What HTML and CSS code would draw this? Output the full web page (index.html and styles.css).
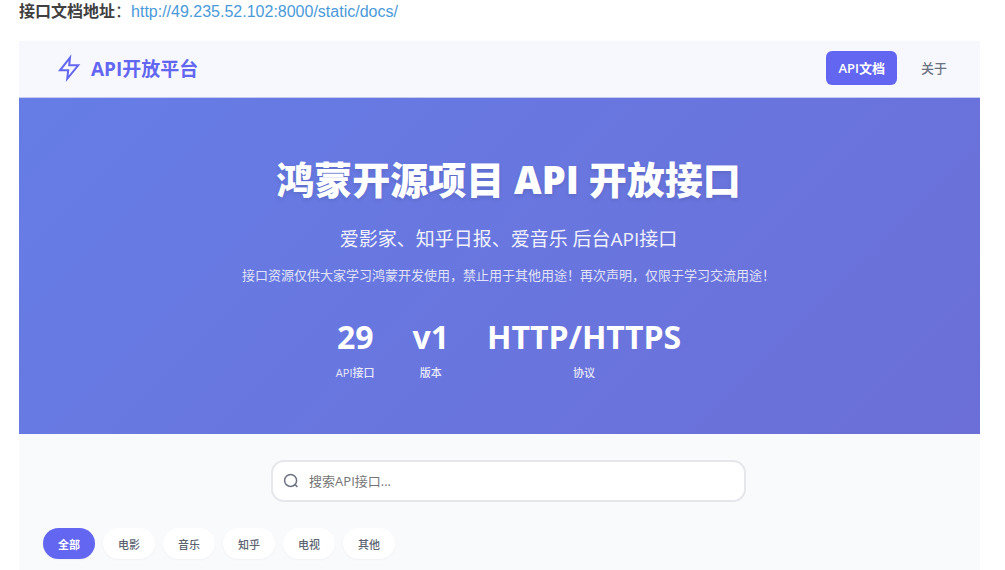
FILE: index.html
```
<!DOCTYPE html>
<html lang="zh-CN">
<head>
  <meta charset="UTF-8" />
  <meta name="viewport" content="width=device-width, initial-scale=1.0"/>
  <title>API开放平台</title>
  <link rel="stylesheet" href="styles.css">
</head>
<body>

  <p class="doc-link"><strong>接口文档地址</strong>：<a href="http://49.235.52.102:8000/static/docs/">http://49.235.52.102:8000/static/docs/</a></p>

  <div class="platform">
    <!-- Header -->
    <header class="navbar">
      <div class="brand">
        <svg class="brand-icon" viewBox="0 0 24 28" fill="none" stroke="currentColor" stroke-width="2" stroke-linejoin="miter">
          <path d="M13 3.6 L3 16.3 H11.2 L10.2 24.8 L21.2 11.3 H12.2 Z"/>
        </svg>
        <span>API开放平台</span>
      </div>
      <nav class="nav-links">
        <a class="nav-link active" href="#docs">API文档</a>
        <a class="nav-link" href="#about">关于</a>
      </nav>
    </header>

    <!-- Hero -->
    <section class="hero">
      <h1>鸿蒙开源项目 API 开放接口</h1>
      <p class="hero-subtitle">爱影家、知乎日报、爱音乐 后台API接口</p>
      <p class="hero-note">接口资源仅供大家学习鸿蒙开发使用，禁止用于其他用途！再次声明，仅限于学习交流用途！</p>
      <div class="stats">
        <div class="stat">
          <div class="stat-value">29</div>
          <div class="stat-label">API接口</div>
        </div>
        <div class="stat">
          <div class="stat-value">v1</div>
          <div class="stat-label">版本</div>
        </div>
        <div class="stat">
          <div class="stat-value">HTTP/HTTPS</div>
          <div class="stat-label">协议</div>
        </div>
      </div>
    </section>

    <!-- Search and filters -->
    <main class="content">
      <label class="search">
        <svg class="search-icon" viewBox="0 0 16 16" fill="none" stroke="currentColor" stroke-width="1.5">
          <circle cx="7.6" cy="7.4" r="6"/>
          <path d="M11.8 11.4 L14.4 13.9"/>
        </svg>
        <input type="text" placeholder="搜索API接口..." aria-label="搜索API接口">
      </label>
      <div class="filters">
        <button class="filter active" type="button">全部</button>
        <button class="filter" type="button">电影</button>
        <button class="filter" type="button">音乐</button>
        <button class="filter" type="button">知乎</button>
        <button class="filter" type="button">电视</button>
        <button class="filter" type="button">其他</button>
      </div>
    </main>
  </div>

</body>
</html>
```
FILE: styles.css
```
:root {
  --primary: #6366f1;
  --text-muted: #6b7280;
  --border: #e5e7eb;
  --content-bg: #f9fafc;
}

* {
  box-sizing: border-box;
}

body {
  margin: 0;
  padding: 0 25px 0 19px;
  background: #fff;
  font-family: "Open Sans", "Noto Sans CJK SC", sans-serif;
}

h1,
p {
  margin: 0;
}

.doc-link {
  padding-bottom: 17px;
  font-family: "Liberation Sans", "Noto Sans CJK SC", sans-serif;
  font-size: 16px;
  line-height: 24px;
  color: #404040;
}

.doc-link a {
  color: #4a9ad9;
  text-decoration: none;
}

/* Header */
.navbar {
  display: flex;
  justify-content: space-between;
  align-items: center;
  height: 57px;
  padding: 0 21px 2px 38px;
  background: #f7f8fe;
  border-bottom: 1px solid #c5cbf0;
}

.brand {
  display: flex;
  align-items: center;
  gap: 10px;
  font-size: 19px;
  font-weight: 700;
  color: var(--primary);
}

.brand-icon {
  width: 24px;
  height: 28px;
}

.nav-links {
  display: flex;
  gap: 12px;
}

.nav-link {
  padding: 7px 12px;
  border-radius: 6px;
  font-size: 13px;
  font-weight: 500;
  line-height: 20px;
  color: var(--text-muted);
  text-decoration: none;
}

.nav-link.active {
  background: var(--primary);
  color: #fff;
  font-weight: 600;
}

/* Hero */
.hero {
  padding: 51px 0 51px 18px;
  background: linear-gradient(135deg, #667de6, #6b6fd7);
  color: #fff;
  text-align: center;
}

.hero h1 {
  margin-bottom: 16px;
  font-size: 38px;
  font-weight: 900;
  line-height: 60px;
  text-shadow: 0 2px 4px rgba(0, 0, 0, 0.1);
}

.hero-subtitle {
  margin-bottom: 12px;
  font-size: 19px;
  line-height: 28px;
  opacity: 0.9;
}

.hero-note {
  margin-bottom: 26px;
  font-size: 13px;
  line-height: 20px;
  opacity: 0.8;
}

.stats {
  display: flex;
  justify-content: center;
  gap: 38px;
}

.stat-value {
  font-size: 32px;
  font-weight: 700;
  line-height: 52px;
}

.stat-label {
  font-size: 11px;
  font-weight: 500;
  line-height: 20px;
  opacity: 0.85;
}

/* Search and filters */
.content {
  padding: 26px 6px 12px 24px;
  background: var(--content-bg);
}

.search {
  display: flex;
  align-items: center;
  gap: 10px;
  width: 51%;
  height: 42px;
  margin: 0 auto 26px;
  padding: 0 10px;
  background: #fff;
  border: 2px solid var(--border);
  border-radius: 13px;
}

.search-icon {
  flex: none;
  width: 16px;
  height: 16px;
  color: var(--text-muted);
}

.search input {
  flex: 1;
  min-width: 0;
  padding: 0;
  border: 0;
  outline: 0;
  background: none;
  font-family: inherit;
  font-size: 13px;
}

.search input::placeholder {
  color: #757575;
}

.filters {
  display: flex;
  gap: 8px;
}

.filter {
  height: 31px;
  padding: 0 15px;
  border: 0;
  border-radius: 16px;
  background: #fff;
  box-shadow: 0 1px 2px rgba(0, 0, 0, 0.04);
  font-family: inherit;
  font-size: 11px;
  font-weight: 500;
  color: #5b6370;
}

.filter.active {
  background: var(--primary);
  color: #fff;
  font-weight: 700;
}
```
